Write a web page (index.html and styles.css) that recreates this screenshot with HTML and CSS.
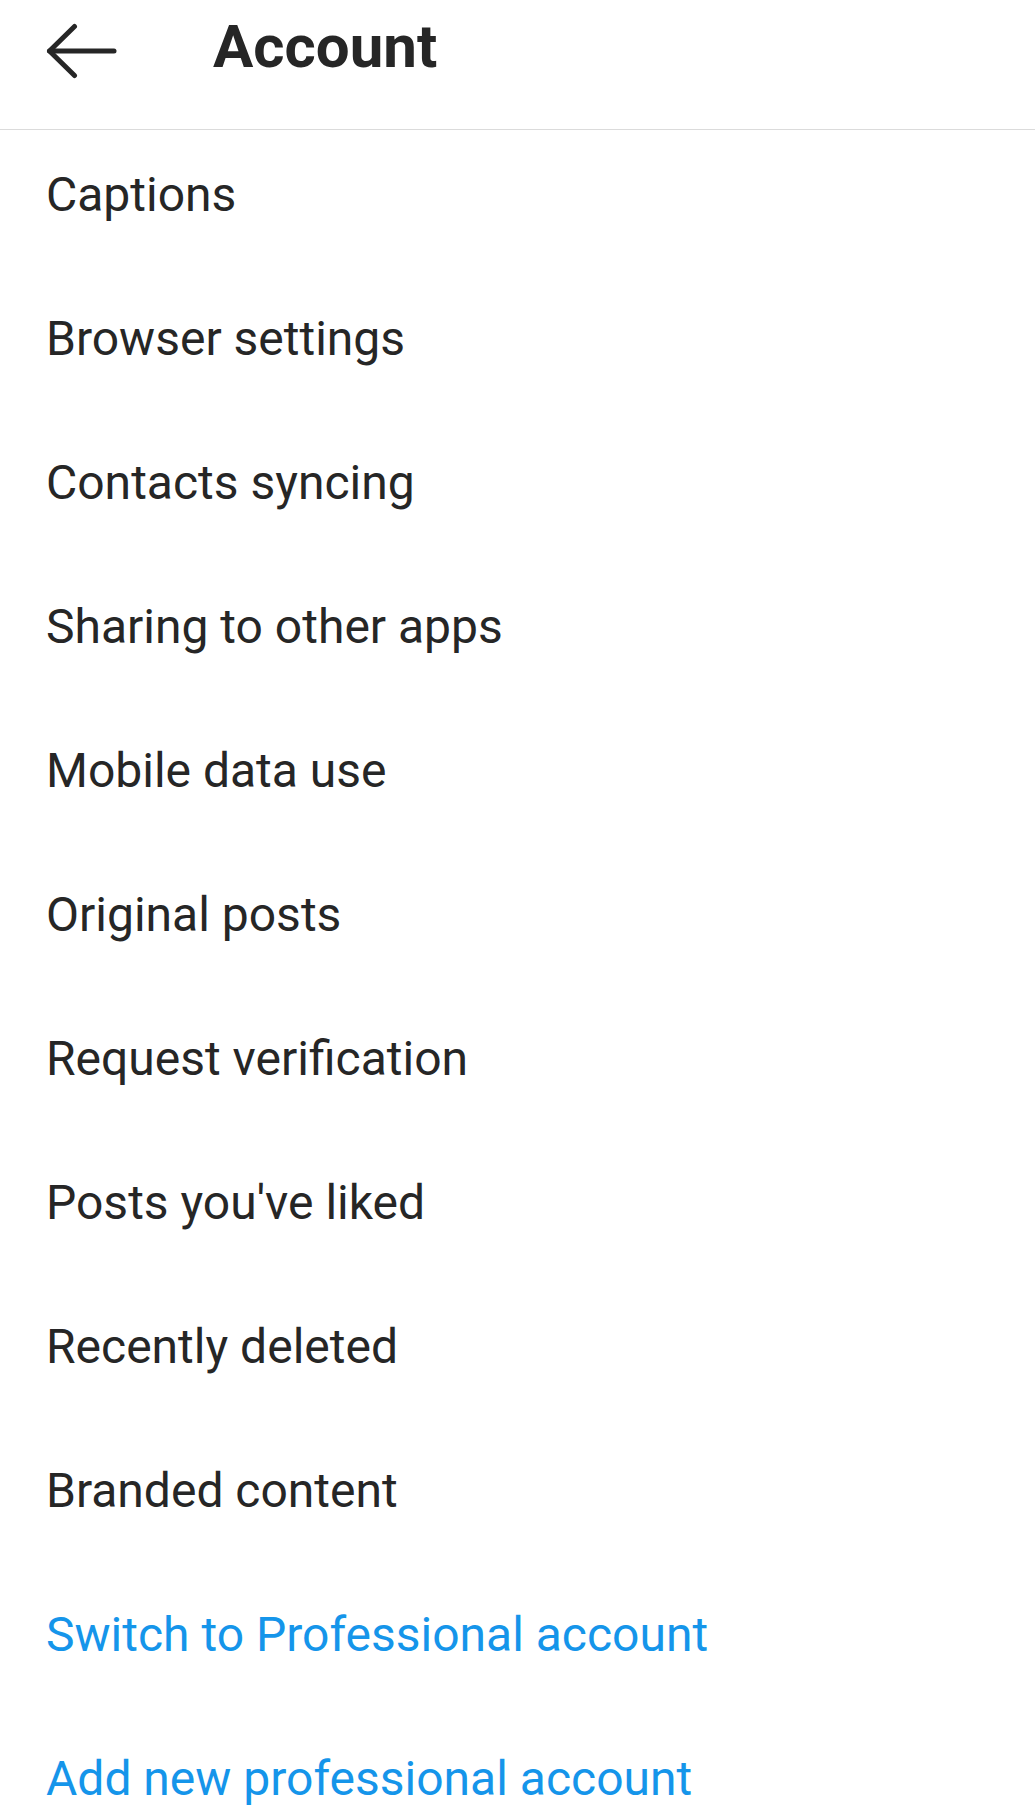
FILE: index.html
```html
<!DOCTYPE html>
<html lang="en">
<head>
    <meta charset="UTF-8">
    <meta name="viewport" content="width=device-width, initial-scale=1.0">
    <title>Account</title>
    <link rel="stylesheet" href="styles.css">
</head>
<body>
    <header class="topbar">
        <a href="#" class="back" aria-label="Back">
            <svg width="72" height="72" viewBox="0 0 72 72" fill="none" stroke="#262626" stroke-width="5" stroke-linecap="round" stroke-linejoin="round">
                <path d="M3.5 36H68"/>
                <path d="M28.5 11.5L3.5 36L28.5 60.5"/>
            </svg>
        </a>
        <h1>Account</h1>
    </header>

    <ul class="menu">
        <li><a href="#">Captions</a></li>
        <li><a href="#">Browser settings</a></li>
        <li><a href="#">Contacts syncing</a></li>
        <li><a href="#">Sharing to other apps</a></li>
        <li><a href="#">Mobile data use</a></li>
        <li><a href="#">Original posts</a></li>
        <li><a href="#">Request verification</a></li>
        <li><a href="#">Posts you've liked</a></li>
        <li><a href="#">Recently deleted</a></li>
        <li><a href="#">Branded content</a></li>
        <li><a href="#" class="link">Switch to Professional account</a></li>
        <li><a href="#" class="link">Add new professional account</a></li>
    </ul>
</body>
</html>
```

FILE: styles.css
```css
body {
    font-family: Roboto, "Liberation Sans", sans-serif;
    margin: 0;
    padding: 0;
    background-color: #fff;
    color: #262626;
}
.topbar {
    display: flex;
    align-items: flex-start;
    height: 130px;
    box-sizing: border-box;
    padding: 14px 0 0 46px;
    border-bottom: 1px solid #dbdbdb;
}
.back {
    display: block;
    width: 72px;
    height: 72px;
    margin-top: 1px;
}
.back svg {
    display: block;
}
.topbar h1 {
    margin: -2px 0 0 95px;
    font-size: 60px;
    line-height: 70px;
    font-weight: 700;
    color: #262626;
}
.menu {
    list-style: none;
    margin: 0;
    padding: 0;
}
.menu li {
    height: 144px;
    box-sizing: border-box;
    padding: 37px 0 0 46px;
}
.menu a {
    font-size: 48px;
    line-height: 56px;
    color: #262626;
    text-decoration: none;
}
.menu a.link {
    color: #1595ea;
}
```
